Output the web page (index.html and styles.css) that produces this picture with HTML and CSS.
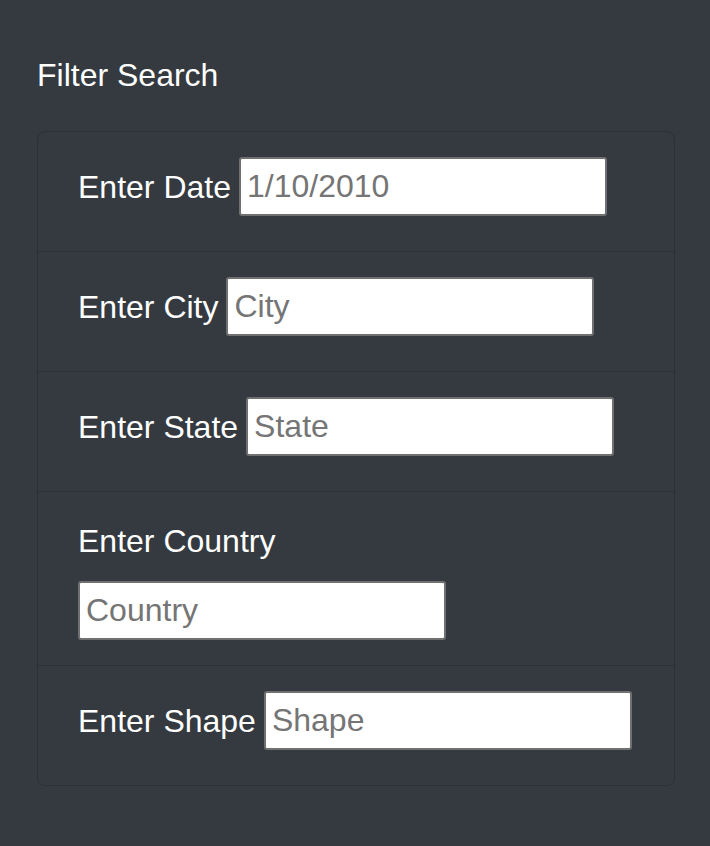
FILE: index.html
```html
<!DOCTYPE html>
<html lang="en">
<head>
<meta charset="utf-8">
<title>Filter Search</title>
<link rel="stylesheet" href="styles.css">
</head>
<body>
<div class="page">
  <h4 class="title">Filter Search</h4>
  <ul class="filters">
    <li class="filter">
      <label class="filter-label" for="date">Enter Date</label>
      <input class="filter-input" id="date" type="text" placeholder="1/10/2010">
    </li>
    <li class="filter">
      <label class="filter-label" for="city">Enter City</label>
      <input class="filter-input" id="city" type="text" placeholder="City">
    </li>
    <li class="filter">
      <label class="filter-label" for="state">Enter State</label>
      <input class="filter-input" id="state" type="text" placeholder="State">
    </li>
    <li class="filter filter-stacked">
      <label class="filter-label" for="country">Enter Country</label>
      <input class="filter-input" id="country" type="text" placeholder="Country">
    </li>
    <li class="filter">
      <label class="filter-label" for="shape">Enter Shape</label>
      <input class="filter-input" id="shape" type="text" placeholder="Shape">
    </li>
  </ul>
</div>
</body>
</html>
```

FILE: styles.css
```css
html, body {
  margin: 0;
  padding: 0;
  background: #343a40;
}

body {
  font-family: "Liberation Sans", Arial, Helvetica, sans-serif;
  color: #ffffff;
  min-height: 846px;
}

.page {
  padding: 56px 35px 0 37px;
}

.title {
  margin: 0 0 37px 0;
  font-size: 32px;
  line-height: 38px;
  font-weight: 400;
  color: #ffffff;
}

.filters {
  list-style: none;
  margin: 0;
  padding: 0;
  border: 1px solid #2c3136;
  border-radius: 8px;
}

.filter {
  display: flex;
  align-items: center;
  gap: 8px;
  padding: 25px 40px 35px 40px;
  border-top: 1px solid #2c3136;
}

.filter:first-child {
  border-top: none;
}

.filter-stacked {
  flex-direction: column;
  align-items: flex-start;
  gap: 0;
  padding-top: 30px;
  padding-bottom: 25px;
}

.filter-stacked .filter-label {
  margin-bottom: 21px;
}

.filter-label {
  flex-shrink: 0;
  white-space: nowrap;
  font-size: 32px;
  line-height: 38px;
  color: #ffffff;
}

.filter-input {
  flex-shrink: 0;
  box-sizing: border-box;
  width: 368px;
  height: 59px;
  margin: 0;
  padding: 0 6px;
  border: 2px solid #707070;
  border-radius: 3px;
  background: #ffffff;
  font-family: "Liberation Sans", Arial, Helvetica, sans-serif;
  font-size: 32px;
  color: #495057;
  outline: none;
}

.filter-input::placeholder {
  color: #757575;
  opacity: 1;
}
```
